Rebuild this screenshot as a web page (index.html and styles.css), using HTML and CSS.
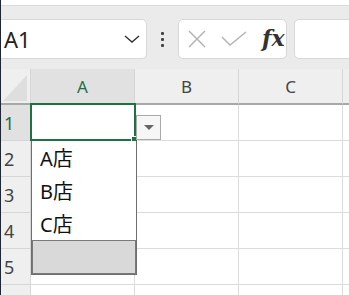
FILE: index.html
```html
<!DOCTYPE html>
<html>
<head>
    <title>Sheet</title>
    <link rel="stylesheet" href="styles.css">
</head>
<body>
<div class="app">
    <div class="topstrip"></div>
    <div class="toolbar">
        <div class="namebox">
            <span class="cellref">A1</span>
            <svg class="chev" width="16" height="8" viewBox="0 0 16 8"><path d="M1 1 L8 7 L15 1" fill="none" stroke="#333" stroke-width="1.4"/></svg>
        </div>
        <div class="dots"><i></i><i></i><i></i></div>
        <div class="fxbox">
            <svg width="20" height="18" viewBox="0 0 20 18"><path d="M2 1 L18 17 M18 1 L2 17" stroke="#b4b4b4" stroke-width="1.5" fill="none"/></svg>
            <svg width="26" height="16" viewBox="0 0 26 16"><path d="M1 6 L9 14 L25 1" stroke="#b4b4b4" stroke-width="1.5" fill="none"/></svg>
            <span class="fx">fx</span>
        </div>
        <div class="formula"></div>
    </div>
    <div class="sheet">
        <div class="grid">
            <div class="hd corner"><svg width="28" height="30" viewBox="0 0 28 30"><path d="M26 2 L26 28 L2 28 Z" fill="#dedede"/></svg></div>
            <div class="hd col sel">A</div>
            <div class="hd col">B</div>
            <div class="hd col">C</div>
            <div class="hd col"></div>

            <div class="rh sel">1</div><div class="c"></div><div class="c"></div><div class="c"></div><div class="c"></div>
            <div class="rh">2</div><div class="c"></div><div class="c"></div><div class="c"></div><div class="c"></div>
            <div class="rh">3</div><div class="c"></div><div class="c"></div><div class="c"></div><div class="c"></div>
            <div class="rh">4</div><div class="c"></div><div class="c"></div><div class="c"></div><div class="c"></div>
            <div class="rh">5</div><div class="c"></div><div class="c"></div><div class="c"></div><div class="c"></div>
            <div class="rh"></div><div class="c"></div><div class="c"></div><div class="c"></div><div class="c"></div>
        </div>
        <div class="active"><span class="handle"></span></div>
        <div class="ddbtn"><svg width="10" height="6" viewBox="0 0 10 6"><path d="M0 0 L10 0 L5 5 Z" fill="#666"/></svg></div>
        <ul class="list">
            <li>A店</li>
            <li>B店</li>
            <li>C店</li>
            <li class="hl"></li>
        </ul>
    </div>
</div>
</body>
</html>
```

FILE: styles.css
```css
body {
    margin: 0;
    width: 349px;
    height: 295px;
    overflow: hidden;
    background: #fff;
    font-family: "Noto Sans", "Noto Sans CJK JP", sans-serif;
}
.app {
    border-left: 1px solid #1f2633;
    height: 295px;
    box-sizing: border-box;
    overflow: hidden;
}
.topstrip {
    height: 5px;
    background: #fff;
    border-bottom: 1px solid #dcdcdc;
}
.toolbar {
    height: 63px;
    background: #ebebeb;
    display: flex;
    align-items: flex-start;
    padding-top: 13px;
    box-sizing: border-box;
    overflow: hidden;
}
.namebox {
    flex-shrink: 0;
    margin-left: -6px;
    width: 152px;
    height: 40px;
    background: #fff;
    border: 1px solid #d8d8d8;
    border-radius: 5px;
    box-sizing: border-box;
    display: flex;
    align-items: center;
    padding-left: 8px;
}
.cellref {
    font-size: 22px;
    color: #222;
    flex: 1;
}
.chev {
    margin-right: 6px;
}
.dots {
    flex-shrink: 0;
    width: 31px;
    height: 40px;
    display: flex;
    flex-direction: column;
    align-items: center;
    justify-content: center;
    gap: 3px;
}
.dots i {
    width: 3px;
    height: 3px;
    background: #444;
    border-radius: 1px;
}
.fxbox {
    width: 109px;
    height: 40px;
    background: #fff;
    border: 1px solid #d8d8d8;
    border-radius: 5px;
    box-sizing: border-box;
    display: flex;
    align-items: center;
    padding-left: 8px;
    gap: 14px;
    flex-shrink: 0;
}
.fx {
    font-family: "DejaVu Serif", serif;
    font-style: italic;
    font-weight: bold;
    font-size: 22px;
    color: #333;
    margin-left: 1px;
    margin-top: -3px;
}
.formula {
    margin-left: 7px;
    width: 80px;
    height: 40px;
    background: #fff;
    border: 1px solid #d8d8d8;
    border-radius: 5px;
    box-sizing: border-box;
    flex-shrink: 0;
}
.sheet {
    position: relative;
}
.grid {
    display: grid;
    grid-template-columns: 30px 104px 104px 104px 104px;
    grid-template-rows: 36px repeat(6, 36px);
}
.hd {
    background: #efefef;
    border-right: 1px solid #d6d6d6;
    border-bottom: 2px solid #a8a8a8;
    box-sizing: border-box;
    display: flex;
    align-items: center;
    justify-content: center;
    font-size: 17px;
    color: #444;
}
.hd.sel {
    background: #e1e1e1;
    color: #1e7145;
}
.corner {
    align-items: flex-end;
    justify-content: flex-start;
}
.corner svg {
    display: block;
}
.rh {
    background: #efefef;
    border-right: 1px solid #d6d6d6;
    border-bottom: 1px solid #d6d6d6;
    box-sizing: border-box;
    font-size: 18px;
    color: #444;
    display: flex;
    align-items: center;
    padding-left: 3px;
}
.rh.sel {
    background: #e1e1e1;
    color: #1e7145;
}
.c {
    border-right: 1px solid #dcdcdc;
    border-bottom: 1px solid #dcdcdc;
    box-sizing: border-box;
}
.active {
    position: absolute;
    left: 29px;
    top: 34px;
    width: 106px;
    height: 38px;
    border: 2px solid #1e7145;
    box-sizing: border-box;
}
.handle {
    position: absolute;
    right: -4px;
    bottom: -4px;
    width: 5px;
    height: 5px;
    background: #1e7145;
    border: 1px solid #fff;
}
.ddbtn {
    position: absolute;
    left: 135px;
    top: 46px;
    width: 25px;
    height: 25px;
    box-sizing: border-box;
    border: 1px solid #a9a9a9;
    background: #f6f6f6;
    display: flex;
    align-items: center;
    justify-content: center;
}
.list {
    position: absolute;
    left: 30px;
    top: 72px;
    width: 106px;
    height: 134px;
    margin: 0;
    padding: 0;
    list-style: none;
    border: 1px solid #6e6e6e;
    border-top: none;
    box-sizing: border-box;
    background: #fff;
}
.list li {
    height: 33px;
    padding-left: 8px;
    font-size: 20px;
    color: #111;
    display: flex;
    align-items: center;
}
.list li.hl {
    height: 34px;
    background: #d9d9d9;
    border: 1px solid #7a7a7a;
    box-sizing: border-box;
}
```
